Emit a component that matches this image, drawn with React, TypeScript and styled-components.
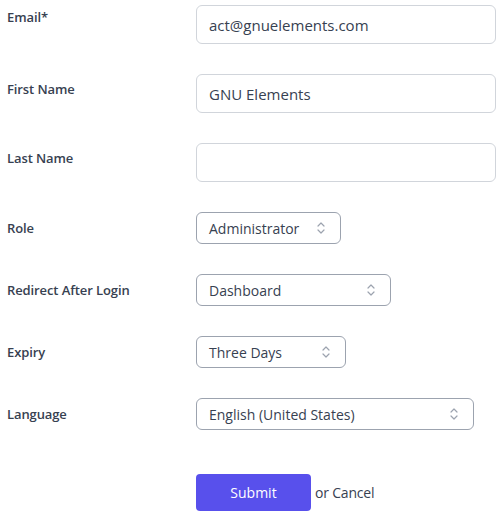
import React from "react";
import styled, { createGlobalStyle } from "styled-components";

const Global = createGlobalStyle`
  html, body { margin: 0; padding: 0; background: #fff; }
  body { font-family: "Open Sans", "Noto Sans", sans-serif; color: #374151; }
  * { box-sizing: border-box; }
`;

const Form = styled.form`
  display: flex;
  flex-direction: column;
  gap: 30px;
  padding: 5px 8px 0 7px;
  width: 503px;
`;

const Row = styled.div<{ $align: "start" | "center" }>`
  display: grid;
  grid-template-columns: 189px 1fr;
  align-items: ${(p) => p.$align};
`;

const Label = styled.label<{ $pad?: number }>`
  font-size: 13px;
  font-weight: 600;
  color: #374151;
  padding-top: ${(p) => p.$pad ?? 0}px;
  letter-spacing: -0.1px;
`;

const TextInput = styled.input`
  width: 300px;
  height: 39px;
  border: 1px solid #d1d5db;
  border-radius: 6px;
  padding: 0 12px;
  font-family: inherit;
  font-size: 15px;
  color: #374151;
  background: #fff;
  outline: none;
`;

const SelectBox = styled.div<{ $w: number }>`
  width: ${(p) => p.$w}px;
  height: 32px;
  border: 1px solid #9ca3af;
  border-radius: 6px;
  display: flex;
  align-items: center;
  justify-content: space-between;
  padding: 0 14px 0 12px;
  font-size: 14px;
  color: #374151;
`;

const Chevron = () => (
  <svg width="10" height="16" viewBox="0 0 10 16" fill="none" stroke="#9ca3af" strokeWidth="1.2" strokeLinecap="round" strokeLinejoin="round">
    <path d="M2 6 L5 3 L8 6" />
    <path d="M2 10 L5 13 L8 10" />
  </svg>
);

const Actions = styled.div`
  display: flex;
  align-items: center;
  gap: 4px;
  padding-left: 189px;
  margin-top: 14px;
`;

const SubmitButton = styled.button`
  width: 115px;
  height: 37px;
  border: none;
  border-radius: 4px;
  background: #5850ec;
  color: #fff;
  font-family: inherit;
  font-size: 14px;
  font-weight: 500;
`;

const CancelText = styled.span`
  font-size: 14px;
  letter-spacing: -0.2px;
  color: #374151;
`;

const selects = [
  { label: "Role", value: "Administrator", w: 145 },
  { label: "Redirect After Login", value: "Dashboard", w: 195 },
  { label: "Expiry", value: "Three Days", w: 150 },
  { label: "Language", value: "English (United States)", w: 278 },
];

export default function App() {
  return (
    <>
      <Global />
      <Form onSubmit={(e) => e.preventDefault()}>
        <Row $align="start">
          <Label $pad={3}>Email*</Label>
          <TextInput defaultValue="act@gnuelements.com" />
        </Row>
        <Row $align="start">
          <Label $pad={6}>First Name</Label>
          <TextInput defaultValue="GNU Elements" />
        </Row>
        <Row $align="start">
          <Label $pad={6}>Last Name</Label>
          <TextInput defaultValue="" />
        </Row>
        {selects.map((s) => (
          <Row $align="center" key={s.label}>
            <Label>{s.label}</Label>
            <SelectBox $w={s.w}>
              <span>{s.value}</span>
              <Chevron />
            </SelectBox>
          </Row>
        ))}
        <Actions>
          <SubmitButton type="submit">Submit</SubmitButton>
          <CancelText>or Cancel</CancelText>
        </Actions>
      </Form>
    </>
  );
}
